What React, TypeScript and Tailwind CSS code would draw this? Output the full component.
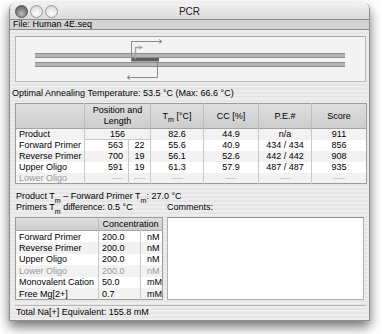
import React from 'react';

const font = { fontFamily: '"Liberation Sans", Arial, sans-serif' };

const TrafficLight = ({ dark }: { dark?: boolean }) => (
  <div
    className={`w-[13px] h-[13px] rounded-full border ${
      dark
        ? 'border-[#555] bg-[radial-gradient(circle_at_50%_70%,#bdbdbd_0%,#7d7d7d_55%,#4f4f4f_100%)]'
        : 'border-[#9a9a9a] bg-[radial-gradient(circle_at_50%_70%,#ffffff_0%,#e6e6e6_55%,#c4c4c4_100%)]'
    }`}
  />
);

const Diagram = () => (
  <svg width="350" height="44" viewBox="0 0 350 44" className="block">
    {/* strands */}
    <rect x="19" y="16" width="310" height="5" fill="#b4b4b4" />
    <line x1="19" y1="16.5" x2="329" y2="16.5" stroke="#8f8f8f" strokeWidth="1" />
    <line x1="19" y1="20.5" x2="329" y2="20.5" stroke="#8f8f8f" strokeWidth="1" />
    <rect x="19" y="25" width="310" height="5" fill="#b4b4b4" />
    <line x1="19" y1="25.5" x2="329" y2="25.5" stroke="#8f8f8f" strokeWidth="1" />
    <line x1="19" y1="29.5" x2="329" y2="29.5" stroke="#8f8f8f" strokeWidth="1" />
    {/* product */}
    <rect x="115" y="21" width="28" height="3.5" fill="#5e5e5e" />
    {/* forward primer */}
    <polyline points="115.5,24 115.5,4.5 145,4.5" fill="none" stroke="#8a8a8a" strokeWidth="1" />
    <polyline points="143,2.5 146,4.5 143,6.5" fill="none" stroke="#8a8a8a" strokeWidth="1" />
    {/* upper oligo */}
    <polyline points="119.5,22 119.5,10.5 123,10.5" fill="none" stroke="#a5a5a5" strokeWidth="1.5" />
    <polygon points="123,8.5 127,10.5 123,12.5" fill="#a5a5a5" />
    {/* reverse primer */}
    <polyline points="141.5,24 141.5,40.5 112,40.5" fill="none" stroke="#8a8a8a" strokeWidth="1" />
    <polyline points="114,38.5 111,40.5 114,42.5" fill="none" stroke="#8a8a8a" strokeWidth="1" />
  </svg>
);

type Row = {
  label: string;
  pos?: string;
  len?: string;
  tm: string;
  cc: string;
  pe: string;
  score: string;
  merged?: boolean;
  off?: boolean;
};

const rows: Row[] = [
  { label: 'Product', pos: '156', tm: '82.6', cc: '44.9', pe: 'n/a', score: '911', merged: true },
  { label: 'Forward Primer', pos: '563', len: '22', tm: '55.6', cc: '40.9', pe: '434 / 434', score: '856' },
  { label: 'Reverse Primer', pos: '700', len: '19', tm: '56.1', cc: '52.6', pe: '442 / 442', score: '908' },
  { label: 'Upper Oligo', pos: '591', len: '19', tm: '61.3', cc: '57.9', pe: '487 / 487', score: '935' },
  { label: 'Lower Oligo', pos: '----', len: '----', tm: '----', cc: '----', pe: '----', score: '----', off: true },
];

const conc = [
  { label: 'Forward Primer', value: '200.0', unit: 'nM' },
  { label: 'Reverse Primer', value: '200.0', unit: 'nM' },
  { label: 'Upper Oligo', value: '200.0', unit: 'nM' },
  { label: 'Lower Oligo', value: '200.0', unit: 'nM', off: true },
  { label: 'Monovalent Cation', value: '50.0', unit: 'mM' },
  { label: 'Free Mg[2+]', value: '0.7', unit: 'mM' },
];

const Tm = () => (
  <>
    T<sub className="text-[7px] align-[-2px] leading-none">m</sub>
  </>
);

export default function App() {
  const th = 'font-normal p-0 border-l border-[#bdbdbd] first:border-l-0 text-center align-middle';
  const td = 'border-l border-[#c9c9c9] text-center leading-[10px] p-0';

  return (
    <div className="w-[382px] h-[334px] bg-white overflow-hidden pt-[3px] pl-[9px] text-[9px] text-black" style={font}>
      <div className="w-[361px] rounded-t-[6px] overflow-hidden shadow-[0_6px_12px_rgba(0,0,0,0.55)] border-x border-b border-[#8e8e8e]">
        {/* title bar */}
        <div className="h-[16px] relative flex items-center bg-[linear-gradient(#f2f2f2,#d9d9d9)]">
          <div className="flex gap-[2px] pl-[5px]">
            <TrafficLight dark />
            <TrafficLight />
            <TrafficLight />
          </div>
          <div className="absolute inset-0 flex items-center justify-center text-[10px] text-[#222]">PCR</div>
        </div>
        {/* file bar */}
        <div className="h-[11px] leading-[9px] pl-[3px] bg-[#d3d3d3] border-t border-b border-[#8c8c8c] text-[9px]">
          File: Human 4E.seq
        </div>
        {/* content */}
        <div className="pl-[5px] pr-[3px] pt-[6px] pb-[1px] bg-[repeating-linear-gradient(0deg,#ededed_0px,#ededed_2px,#e6e6e6_2px,#e6e6e6_4px)]">
          <div className="h-[46px] border border-[#b9b9b9] border-t-[#a8a8a8] bg-[#f3f3f3]">
            <Diagram />
          </div>

          <div className="-ml-[3px] mt-[4px] h-[14px] leading-[14px]">
            Optimal Annealing Temperature: 53.5 °C (Max: 66.6 °C)
          </div>

          <table className="mt-[3px] w-[351px] table-fixed border-collapse border border-[#9c9c9c] bg-white">
            <colgroup>
              <col className="w-[69px]" />
              <col className="w-[44px]" />
              <col className="w-[22px]" />
              <col className="w-[53px]" />
              <col className="w-[55px]" />
              <col className="w-[53px]" />
              <col className="w-[55px]" />
            </colgroup>
            <thead>
              <tr className="h-[25px] bg-[linear-gradient(#dedede,#cdcdcd)] border-b border-[#a5a5a5] leading-[11px]">
                <th className={th}></th>
                <th className={th} colSpan={2}>
                  Position and
                  <br />
                  Length
                </th>
                <th className={th}>
                  <Tm /> [°C]
                </th>
                <th className={th}>CC [%]</th>
                <th className={th}>P.E.#</th>
                <th className={th}>Score</th>
              </tr>
            </thead>
            <tbody>
              {rows.map((r, i) => {
                const c = r.off ? 'text-[#b5b5b5]' : '';
                const top = i === 1 ? 'border-t border-t-[#c9c9c9]' : '';
                return (
                  <tr key={r.label} className={`h-[11px] ${i % 2 === 0 ? 'bg-[#f2f2f2]' : 'bg-white'}`}>
                    <td className={`leading-[10px] p-0 pl-[3px] whitespace-nowrap ${r.off ? 'text-[#9a9a9a]' : ''}`}>
                      {r.label}
                    </td>
                    {r.merged ? (
                      <td className={td} colSpan={2}>
                        {r.pos}
                      </td>
                    ) : (
                      <>
                        <td className={`${td} text-right pr-[5px] ${top} ${c}`}>{r.pos}</td>
                        <td className={`${td} ${top} ${c}`}>{r.len}</td>
                      </>
                    )}
                    <td className={`${td} ${c}`}>{r.tm}</td>
                    <td className={`${td} ${c}`}>{r.cc}</td>
                    <td className={`${td} ${c}`}>{r.pe}</td>
                    <td className={`${td} ${c}`}>{r.score}</td>
                  </tr>
                );
              })}
            </tbody>
          </table>

          <div className="mt-[7px] pl-[1px] h-[11px] leading-[11px] whitespace-nowrap">
            Product <Tm /> – Forward Primer <Tm />: 27.0 °C
          </div>

          <div className="flex gap-[5px]">
            <div className="w-[147px]">
              <div className="pl-[1px] h-[11px] leading-[11px] whitespace-nowrap">
                Primers <Tm /> difference: 0.5 °C
              </div>
              <table className="mt-[4px] w-[147px] table-fixed border-collapse border border-[#9c9c9c] bg-white">
                <colgroup>
                  <col className="w-[83px]" />
                  <col className="w-[42px]" />
                  <col className="w-[22px]" />
                </colgroup>
                <thead>
                  <tr className="h-[13px] bg-[linear-gradient(#dedede,#cdcdcd)] border-b border-[#a5a5a5] leading-[10px]">
                    <th className={th}></th>
                    <th className={th} colSpan={2}>
                      Concentration
                    </th>
                  </tr>
                </thead>
                <tbody>
                  {conc.map((r, i) => (
                    <tr key={r.label} className={`h-[11.5px] ${i % 2 === 1 ? 'bg-[#f2f2f2]' : 'bg-white'} ${r.off ? 'text-[#9a9a9a]' : ''}`}>
                      <td className="p-0 pl-[3px] leading-[10px] whitespace-nowrap">{r.label}</td>
                      <td className="p-0 pl-[3px] leading-[10px] border-l border-[#c9c9c9]">{r.value}</td>
                      <td className="p-0 pl-[6px] leading-[10px] border-l border-[#c9c9c9]">{r.unit}</td>
                    </tr>
                  ))}
                </tbody>
              </table>
            </div>
            <div className="w-[197px]">
              <div className="h-[11px] leading-[11px]">Comments:</div>
              <div className="mt-[4px] h-[83px] bg-white border border-[#b0b0b0] border-t-[#8a8a8a]" />
            </div>
          </div>

          <div className="mt-[5px] border-t border-[#b5b5b5] h-[14px] leading-[13px] pl-[1px]">
            Total Na[+] Equivalent: 155.8 mM
          </div>
        </div>
      </div>
    </div>
  );
}
